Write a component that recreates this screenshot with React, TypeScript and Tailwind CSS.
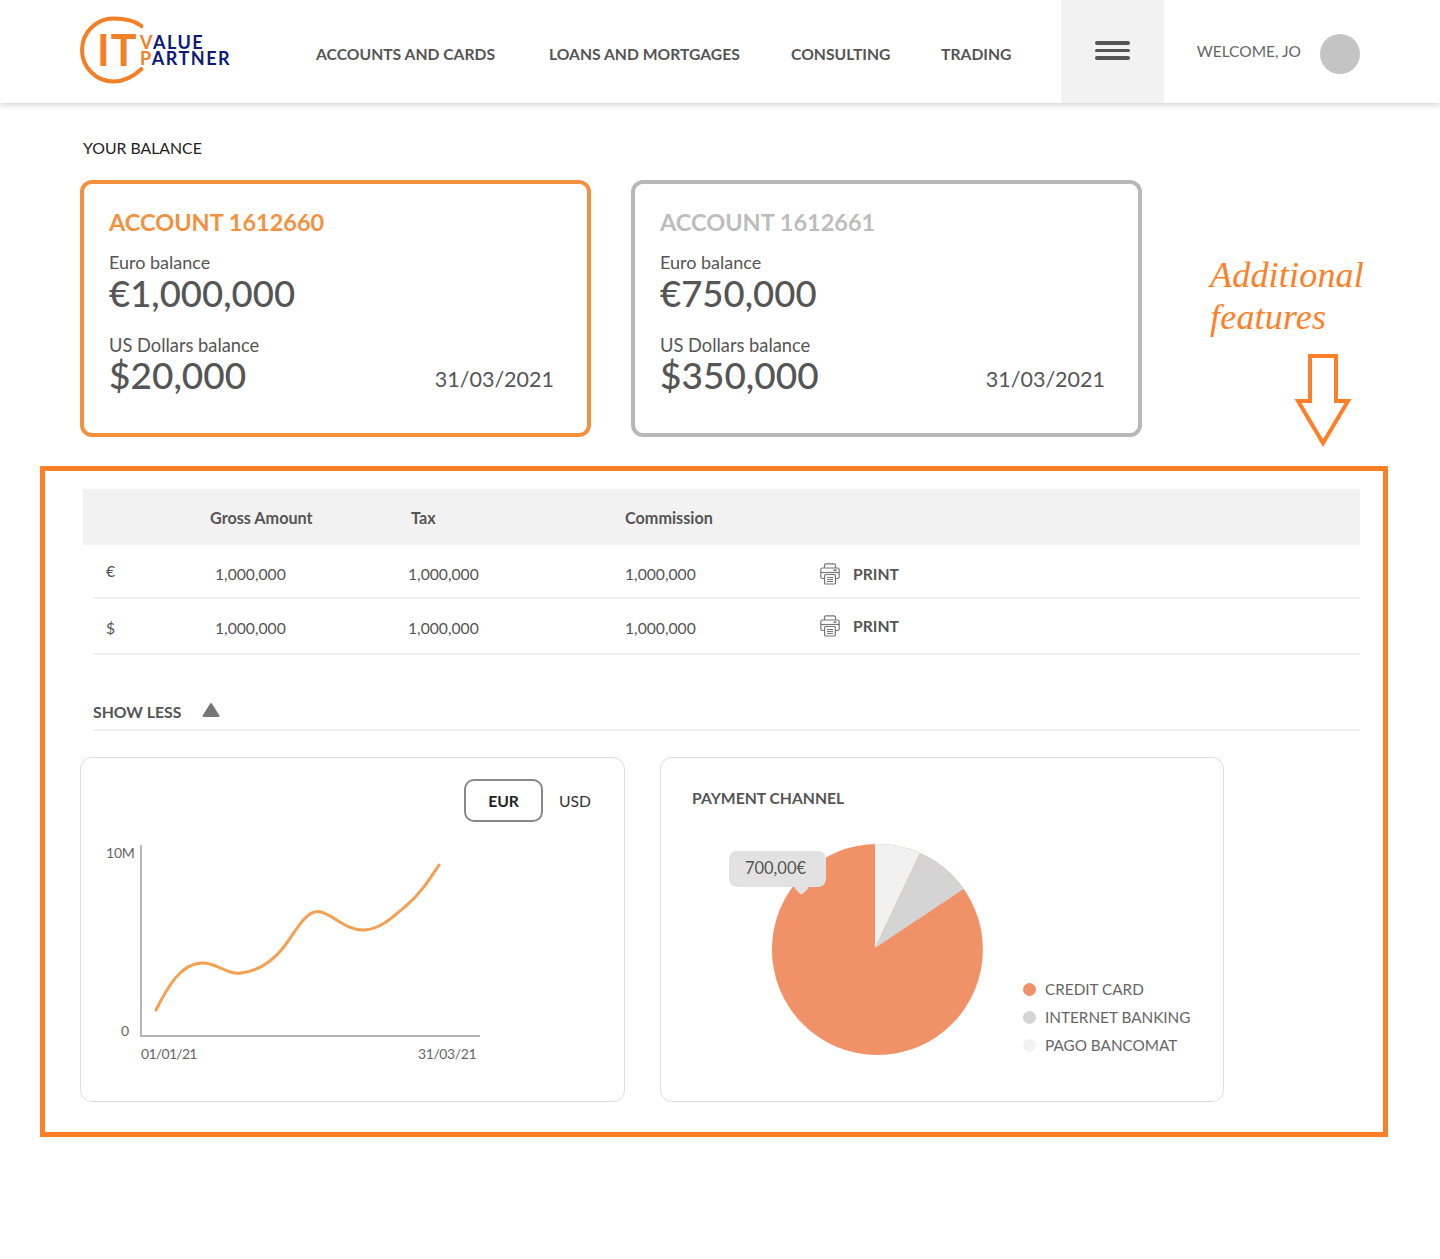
const NAV = [
  { label: 'ACCOUNTS AND CARDS', width: 'w-[233px]' },
  { label: 'LOANS AND MORTGAGES', width: 'w-[242px]' },
  { label: 'CONSULTING', width: 'w-[150px]' },
  { label: 'TRADING', width: '' },
];

const ACCOUNTS = [
  { id: '1612660', euro: '€1,000,000', usd: '$20,000', border: 'border-[#f4913f]', title: 'text-[#f4913f]' },
  { id: '1612661', euro: '€750,000', usd: '$350,000', border: 'border-[#b8b8b8]', title: 'text-[#bdbdbd]' },
];

const Logo = () => (
  <div className="relative w-[150px] h-[70px]">
    <svg width="70" height="70" viewBox="0 0 70 70" className="absolute left-0 top-0">
      <path d="M61.5 10 C54 4 44 2.5 33.5 2.5 A31.5 31.5 0 0 0 33.5 65.5 C44 65.5 54 60 61.5 53" fill="none" stroke="#f37f26" strokeWidth="4" strokeLinecap="round" />
    </svg>
    <span className="absolute left-[17px] top-[9px] text-[43px] leading-[50px] font-bold text-[#f37f26] tracking-[1px]">IT</span>
    <div className="absolute left-[60px] top-[18px] text-[18px] leading-[16px] font-bold text-[#0b1a78] tracking-[1.5px]">
      <div><span className="text-[#f37f26]">V</span>ALUE</div>
      <div><span className="text-[#f37f26]">P</span>ARTNER</div>
    </div>
  </div>
);

const Header = () => (
  <header className="h-[103px] bg-white shadow-[0_2px_6px_rgba(0,0,0,0.18)] flex items-center pl-20 pr-20 relative">
    <div className="-mt-[2px]"><Logo /></div>
    <nav className="flex ml-[86px] text-[15.7px] font-bold text-[#555] mt-[7px]">
      {NAV.map(n => <span key={n.label} className={n.width}>{n.label}</span>)}
    </nav>
    <button className="ml-auto w-[103px] h-full bg-[#f2f2f2] flex flex-col items-center justify-center gap-[4px] pb-[2px]">
      <span className="block w-[35px] h-[3.5px] bg-[#555] rounded-sm" />
      <span className="block w-[35px] h-[3.5px] bg-[#555] rounded-sm" />
      <span className="block w-[35px] h-[3.5px] bg-[#555] rounded-sm" />
    </button>
    <span className="ml-[33px] text-[15.5px] text-[#666]">WELCOME, JO</span>
    <div className="ml-[19px] w-10 h-10 rounded-full bg-[#c4c4c4] mt-[5px]" />
  </header>
);

const AccountCard = ({ a }: { a: (typeof ACCOUNTS)[number] }) => (
  <div className={`w-[511px] h-[257px] border-4 rounded-[12px] pl-[25px] pr-[33px] pt-[23px] text-[#555] ${a.border}`}>
    <div className={`text-[23.5px] leading-[30px] font-bold ${a.title}`}>ACCOUNT {a.id}</div>
    <div className="mt-[13px] text-[18px] leading-[24px]">Euro balance</div>
    <div className="text-[36.5px] leading-[40px] font-medium -mt-[1px]">{a.euro}</div>
    <div className="mt-[20px] text-[18.3px] leading-[24px]">US Dollars balance</div>
    <div className="flex items-end justify-between -mt-[2px]">
      <div className="text-[37px] leading-[40px] font-medium">{a.usd}</div>
      <div className="text-[21.5px] leading-[30px] mb-[1px]">31/03/2021</div>
    </div>
  </div>
);

const PrinterIcon = () => (
  <svg width="20" height="22" viewBox="0 0 20 22" fill="none" stroke="#777" strokeWidth="1.2">
    <path d="M4.5 5V2.2a1.4 1.4 0 0 1 1.4-1.4h8.2a1.4 1.4 0 0 1 1.4 1.4V5" />
    <path d="M4.5 15.5H2.5A1.7 1.7 0 0 1 .8 13.8V6.7A1.7 1.7 0 0 1 2.5 5h15a1.7 1.7 0 0 1 1.7 1.7v7.1a1.7 1.7 0 0 1-1.7 1.7h-2" />
    <path d="M.8 9.5h18.4" />
    <path d="M13.5 7.2h3" strokeWidth="1.6" />
    <rect x="4.6" y="11.5" width="10.8" height="9.5" rx="1" fill="#fff" />
    <path d="M7 14.5h6M7 16.5h6M7 18.5h6" />
  </svg>
);

type RowProps = { symbol: string; height: string; symbolOffset: string; printOffset: string };

const TableRow = ({ symbol, height, symbolOffset, printOffset }: RowProps) => (
  <div className={`flex items-center ml-[10px] text-[15.7px] text-[#555] border-b-2 border-[#f0f0f0] ${height}`}>
    <span className={`w-[122px] pl-[13px] ${symbolOffset}`}>{symbol}</span>
    <span className="w-[193px]">1,000,000</span>
    <span className="w-[217px]">1,000,000</span>
    <span className="w-[195px]">1,000,000</span>
    <span className={`flex items-center gap-[13px] font-bold ${printOffset}`}>
      <PrinterIcon />
      PRINT
    </span>
  </div>
);

const TableSection = () => (
  <section>
    <div className="h-14 bg-[#f2f2f2] flex items-center ml-[3px] pt-[3px] text-[16.2px] font-bold text-[#555]">
      <span className="ml-[127px] w-[201px]">Gross Amount</span>
      <span className="w-[214px]">Tax</span>
      <span>Commission</span>
    </div>
    <div className="ml-[3px]">
      <TableRow symbol="€" height="h-[54px] pt-[7px]" symbolOffset="-mt-[5px]" printOffset="" />
      <TableRow symbol="$" height="h-[56px] pt-[6px]" symbolOffset="" printOffset="-mt-[5px]" />
    </div>
    <div className="ml-[13px] mt-[44px] h-[32px] border-b-2 border-[#f0f0f0] flex items-start gap-[21px] text-[15.8px] font-bold text-[#555]">
      <span className="leading-[25px]">SHOW LESS</span>
      <svg width="18" height="16" viewBox="0 0 18 16" className="mt-[3px]">
        <path d="M9 2 L16.5 14 H1.5 Z" fill="#777" stroke="#777" strokeWidth="2" strokeLinejoin="round" />
      </svg>
    </div>
  </section>
);

const LineChart = () => (
  <svg width="420" height="240" viewBox="0 0 420 240" className="mt-[17px]" fontFamily="Lato, sans-serif" fontSize="14" fill="#666">
    <path d="M60 6 V197 H399" fill="none" stroke="#b5b5b5" strokeWidth="2" />
    <path
      d="M75 171 C87 147 100 125 120 124 C136 123 145 136 160 134 C176 132 190 124 202 109 C214 94 224 72 237 72.5 C250 73 264 92 283 91 C300 90 312 78 326 66 C340 54 348 41 358 26"
      fill="none"
      stroke="#f4a052"
      strokeWidth="3"
      strokeLinecap="round"
    />
    <text x="25" y="19" letterSpacing="-0.2">10M</text>
    <text x="40" y="197">0</text>
    <text x="60" y="220" letterSpacing="-0.7">01/01/21</text>
    <text x="337" y="220" letterSpacing="-0.4">31/03/21</text>
  </svg>
);

const BalanceChartCard = () => (
  <div className="w-[545px] h-[345px] border border-[#ddd] rounded-[12px] pt-[21px]">
    <div className="flex items-center justify-end pr-[33px] text-[15.7px] text-[#333] gap-4">
      <span className="w-[79px] h-[43px] border-2 border-[#888] rounded-[10px] flex items-center justify-center pt-[2px] font-bold text-[#222]">EUR</span>
      <span className="pt-[2px]">USD</span>
    </div>
    <LineChart />
  </div>
);

const LEGEND = [
  { label: 'CREDIT CARD', dot: 'bg-[#f19167]' },
  { label: 'INTERNET BANKING', dot: 'bg-[#d4d4d4]' },
  { label: 'PAGO BANCOMAT', dot: 'bg-[#f2f2f2]' },
];

const PaymentCard = () => (
  <div className="w-[564px] h-[345px] border border-[#ddd] rounded-[12px] relative flex pl-[31px] pt-[32px]">
    <div className="text-[15.7px] font-bold text-[#555] leading-5 absolute top-[30px]">PAYMENT CHANNEL</div>
    <svg width="240" height="240" viewBox="0 0 240 240" className="ml-[60px] mt-[52px] shrink-0">
      <circle cx="125.4" cy="107.5" r="105.5" fill="#f19167" />
      <path d="M123 106 L123 2 A105.5 105.5 0 0 1 168 11 Z" fill="#f1f1f1" />
      <path d="M123 106 L168 11 A105.5 105.5 0 0 1 211.6 47 Z" fill="#d4d4d4" />
    </svg>
    <div className="absolute left-[68px] top-[93px] w-[97px] h-9 pr-1 pb-[2px] rounded-lg bg-[#e2e2e2] flex items-center justify-center text-[16.5px] text-[#555]">
      700,00€
      <span className="absolute left-[67px] -bottom-[6px] w-[11px] h-[11px] rotate-45 rounded-[3px] bg-[#e2e2e2]" />
    </div>
    <div className="ml-[31px] mt-[189px] flex flex-col gap-[8px] text-[15.3px] text-[#666]">
      {LEGEND.map(l => (
        <div key={l.label} className="flex items-center gap-[9px] h-5">
          <span className={`w-[13px] h-[13px] rounded-full ${l.dot}`} />
          {l.label}
        </div>
      ))}
    </div>
  </div>
);

export default function App() {
  return (
    <div className="relative w-[1440px] h-[1259px] bg-white font-['Lato',sans-serif]">
      <Header />
      <main className="pt-[35px]">
        <div className="ml-[83px] text-[15.8px] leading-5 text-[#222]">YOUR BALANCE</div>
        <div className="ml-20 mt-[22px] flex gap-10">
          {ACCOUNTS.map(a => <AccountCard key={a.id} a={a} />)}
        </div>
        <div className="ml-10 mt-[29px] w-[1348px] h-[671px] border-[5px] border-[#ff7f27] pl-[35px] pr-[23px] pt-[18px]">
          <TableSection />
          <div className="mt-[26px] flex gap-[35px]">
            <BalanceChartCard />
            <PaymentCard />
          </div>
        </div>
      </main>
      <div className="absolute left-[1210px] top-[254px] font-['Liberation_Serif',serif] italic text-[36px] tracking-[0.2px] leading-[42px] text-[#ff7f27]">
        Additional<br />features
      </div>
      <svg width="60" height="96" viewBox="0 0 60 96" className="absolute left-[1293px] top-[353px]">
        <path d="M17 3 H43 V48 H55 L30 90 L5 48 H17 Z" fill="none" stroke="#ff7f27" strokeWidth="4" />
      </svg>
    </div>
  );
}
